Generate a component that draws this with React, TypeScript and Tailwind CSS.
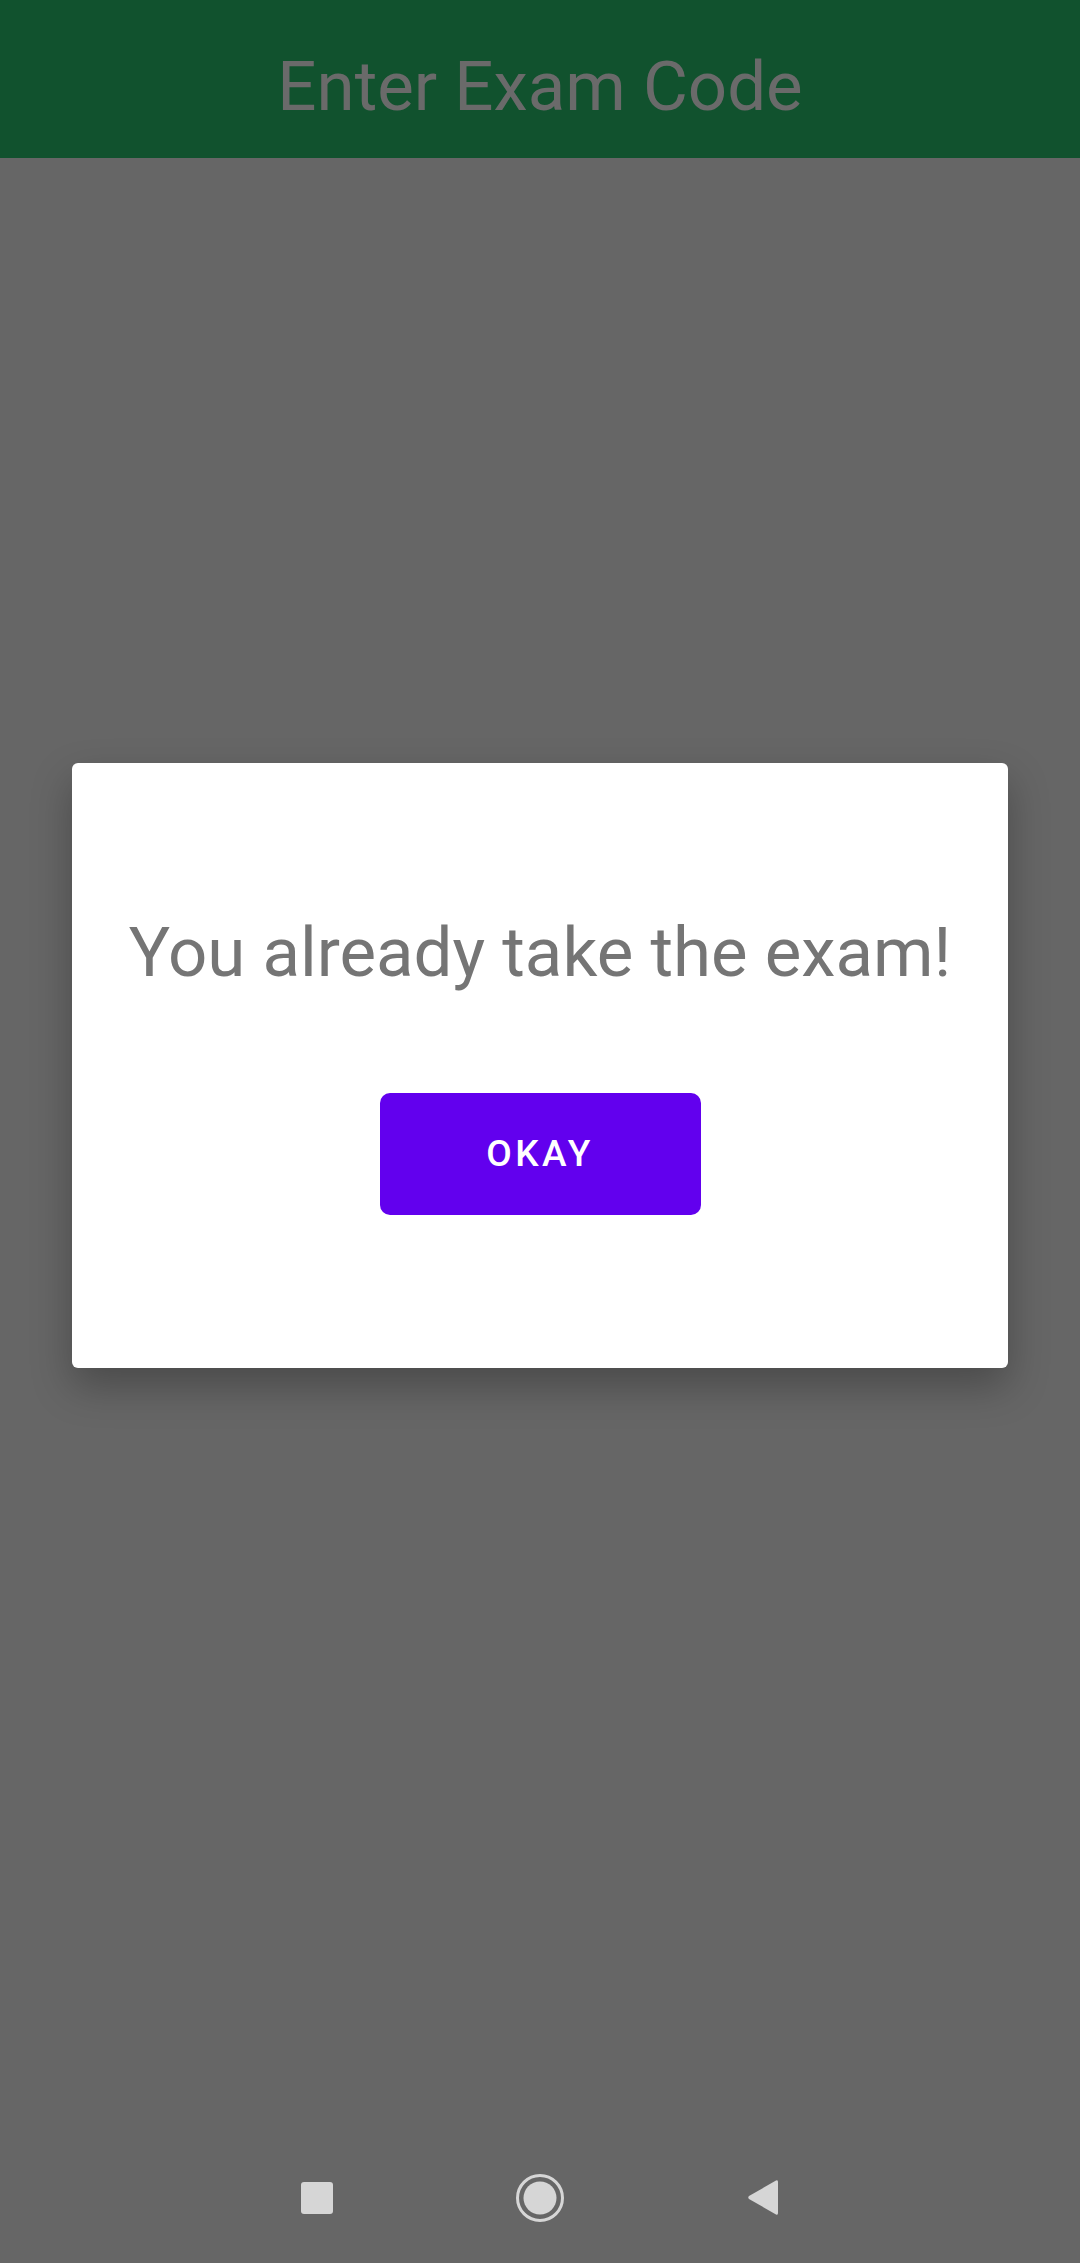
import React from 'react';

const roboto = { fontFamily: 'Roboto, "Noto Sans", sans-serif' };

const NavBar: React.FC = () => (
  <div className="h-[133px] flex items-center justify-center gap-[182px] pt-[2px]">
    <div className="w-[32px] h-[32px] rounded-[3px] bg-[#d6d6d6]" />
    <svg width="50" height="50" viewBox="0 0 50 50">
      <circle cx="25" cy="25" r="22.5" fill="none" stroke="#d6d6d6" strokeWidth="3" />
      <circle cx="25" cy="25" r="16.5" fill="#d6d6d6" />
    </svg>
    <svg width="32" height="37" viewBox="0 0 32 37">
      <path d="M29 1.5 Q31 0.5 31 3 L31 34 Q31 36.5 29 35.5 L2 20 Q0.5 18.5 2 17 Z" fill="#d6d6d6" />
    </svg>
  </div>
);

export default function App() {
  const [open, setOpen] = React.useState(true);

  return (
    <div className="w-[1080px] h-[2263px] flex flex-col bg-[#666666]" style={roboto}>
      <div className="relative flex-1 flex flex-col">
        <header className="h-[158px] bg-[#11522e] flex justify-center pt-[35px]">
          <h1 className="text-[69px] leading-normal font-normal text-[#6a6a6a]">Enter Exam Code</h1>
        </header>
        {open && (
          <div className="absolute inset-0 flex items-center justify-center">
            <div className="w-[936px] h-[605px] bg-white rounded-[6px] shadow-[0_18px_40px_rgba(0,0,0,0.28)] flex flex-col items-center pt-[138px]">
              <p className="text-[69px] leading-normal text-[#757575]">You already take the exam!</p>
              <button
                className="mt-[89px] w-[321px] h-[122px] rounded-[10px] bg-[#6200ee] text-white text-[37px] font-medium tracking-[0.09em] uppercase"
                onClick={() => setOpen(false)}
              >
                Okay
              </button>
            </div>
          </div>
        )}
      </div>
      <NavBar />
    </div>
  );
}
